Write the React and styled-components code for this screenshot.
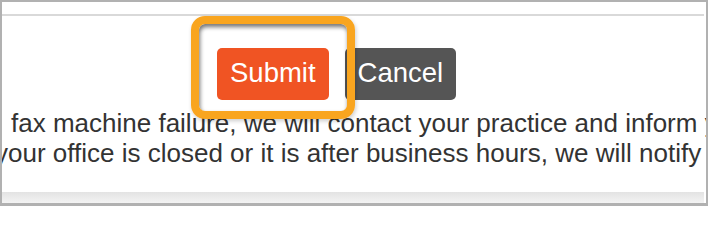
import styled, { createGlobalStyle } from 'styled-components'

const GlobalStyle = createGlobalStyle`
  html, body {
    margin: 0;
    padding: 0;
    background: #ffffff;
  }
  body {
    font-family: "Liberation Sans", Arial, sans-serif;
  }
`

const lines = [
  { id: 1, indent: 9, text: 'fax machine failure, we will contact your practice and inform you' },
  { id: 2, indent: -7, text: 'your office is closed or it is after business hours, we will notify you' },
]

const App = () => {
  return (
    <>
      <GlobalStyle />
      <Frame>
        <TopStrip />
        <Content>
          <ButtonRow>
            <Button variant="primary">Submit</Button>
            <Button variant="secondary">Cancel</Button>
          </ButtonRow>
          <Notice>
            {lines.map((line) => (
              <Line key={line.id} indent={line.indent}>
                {line.text}
              </Line>
            ))}
          </Notice>
        </Content>
        <BottomShade />
        <Highlight />
      </Frame>
    </>
  )
}

const Frame = styled.div`
  position: relative;
  box-sizing: border-box;
  width: 708px;
  height: 206px;
  display: flex;
  flex-direction: column;
  background: #ffffff;
  border: 2px solid #b1b1b1;
  border-bottom-width: 3px;
  overflow: hidden;
`

const TopStrip = styled.div`
  flex: none;
  height: 12px;
  margin-right: 2px;
  border-bottom: 2px solid #d9d9d9;
`

const Content = styled.div`
  flex: 1;
  min-height: 0;
  padding-top: 32px;
  overflow: hidden;
`

const ButtonRow = styled.div`
  display: flex;
  gap: 16px;
  padding-left: 215px;
`

const Button = styled.button`
  height: 52px;
  padding: 0 13px 3px;
  border: none;
  border-radius: 5px;
  font-family: "Liberation Sans", Arial, sans-serif;
  font-size: 27.5px;
  color: #ffffff;
  background: ${({ variant }) => (variant === 'primary' ? '#f05423' : '#555555')};
  cursor: pointer;
`

const Notice = styled.div`
  margin-top: 8px;
  font-size: 26px;
  line-height: 30px;
  color: #333333;
`

const Line = styled.div`
  white-space: nowrap;
  margin-left: ${({ indent }) => indent}px;
`

const BottomShade = styled.div`
  flex: none;
  height: 11px;
  margin-right: 2px;
  background: linear-gradient(to bottom, #e3e3e3, #f3f3f3);
`

const Highlight = styled.div`
  position: absolute;
  left: 189px;
  top: 14px;
  width: 164px;
  height: 103px;
  box-sizing: border-box;
  border: 8px solid #f9a51f;
  border-radius: 14px;
  box-shadow: inset 1px 3px 4px rgba(0, 0, 0, 0.55), 1px 2px 4px rgba(0, 0, 0, 0.2);
  pointer-events: none;
`

export default App
